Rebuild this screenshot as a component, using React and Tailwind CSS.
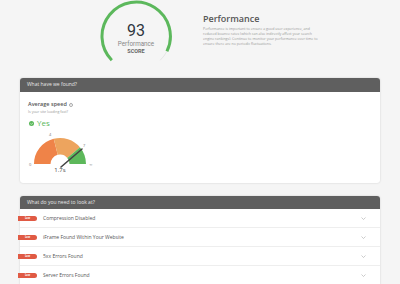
import React from "react";

function pt(cx, cy, r, deg) {
  const a = (deg * Math.PI) / 180;
  return [cx + r * Math.cos(a), cy - r * Math.sin(a)];
}
function sector(cx, cy, ro, ri, a0, a1) {
  const [x0, y0] = pt(cx, cy, ro, a0);
  const [x1, y1] = pt(cx, cy, ro, a1);
  const [x2, y2] = pt(cx, cy, ri, a1);
  const [x3, y3] = pt(cx, cy, ri, a0);
  return `M${x0} ${y0} A${ro} ${ro} 0 0 1 ${x1} ${y1} L${x2} ${y2} A${ri} ${ri} 0 0 0 ${x3} ${y3} Z`;
}

function ScoreRing() {
  return (
    <svg width="72" height="72" viewBox="0 0 72 72" className="block">
      <path d="M11.8 60.2 A34.2 34.2 0 1 1 66.9 51.3" fill="none" stroke="#5cb85c" strokeWidth="3" />
      <path d="M66.9 51.3 A34.2 34.2 0 0 1 60.2 60.2" fill="none" stroke="#e6e6e6" strokeWidth="1" />
    </svg>
  );
}

function Gauge() {
  const cx = 35, cy = 33;
  return (
    <svg width="72" height="44" viewBox="0 0 72 44" className="block">
      <path d={sector(cx, cy, 26, 9.5, 180, 104)} fill="#ef8348" />
      <path d={sector(cx, cy, 26, 9.5, 104, 40)} fill="#eda45e" />
      <path d={sector(cx, cy, 26, 9.5, 40, 0)} fill="#5db85b" />
      <text x="4" y="35" fontSize="4" fill="#777" fontFamily="Open Sans">0</text>
      <text x="24" y="5" fontSize="4" fill="#777" fontFamily="Open Sans">4</text>
      <text x="58" y="16" fontSize="4" fill="#777" fontFamily="Open Sans">7</text>
      <text x="64.5" y="35" fontSize="4" fill="#777" fontFamily="Open Sans">∞</text>
      <line x1="36" y1="36" x2="57" y2="18" stroke="#444" strokeWidth="1.6" strokeLinecap="round" />
      <text x="35" y="40.5" fontSize="6" fill="#444" textAnchor="middle" fontFamily="Open Sans">1.7s</text>
    </svg>
  );
}

function Row({ label, last }) {
  return (
    <div className={`relative flex h-[19px] items-center ${last ? "" : "border-b border-[#eeeeee]"}`}>
      <div className="absolute left-[-2px] top-[6.5px] flex h-[5.5px] w-[19px] items-center justify-center rounded-r-[3px] bg-[#e05a44] text-[2.5px] font-bold leading-[3px] text-white">
        Low
      </div>
      <span className="ml-[23px] text-[5px] leading-[7px] text-[#555]">{label}</span>
      <svg className="ml-auto mr-[14px]" width="5" height="3" viewBox="0 0 5 3">
        <path d="M0.5 0.5 L2.5 2.5 L4.5 0.5" fill="none" stroke="#aaa" strokeWidth="0.6" />
      </svg>
    </div>
  );
}

export default function App() {
  return (
    <div className="h-[284px] w-[400px] overflow-hidden bg-[#f5f5f5]" style={{ fontFamily: '"Open Sans", sans-serif' }}>
      <div className="flex h-[78px]">
        <div className="relative ml-[100px] h-[72px] w-[72px]">
          <ScoreRing />
          <div
            className="absolute inset-0 flex flex-col items-center pt-[21px]"
            style={{ fontFamily: 'Roboto, "Open Sans", sans-serif' }}
          >
            <span className="text-[16px] leading-[19px] text-[#2f3640]">93</span>
            <span className="mt-[0.5px] text-[6.3px] leading-[7.5px] text-[#888]">Performance</span>
            <span className="text-[5.5px] font-bold leading-[6.5px] text-[#666]">SCORE</span>
          </div>
        </div>
        <div className="ml-[31px] mt-[13px] w-[118px]">
          <div className="text-[9px] font-semibold leading-[11px] text-[#555]">Performance</div>
          <p className="mt-[2px] text-[3.55px] leading-[5px] text-[#999]">
            Performance is important to ensure a good user experience, and reduced bounce rates (which can also indirectly affect your search engine rankings). Continue to monitor your performance over time to ensure there are no periodic fluctuations.
          </p>
        </div>
      </div>

      <div className="mx-[20px] h-[105px] overflow-hidden rounded-[3px] bg-white shadow-[0_0_2px_rgba(0,0,0,0.18)]">
        <div className="flex h-[14px] items-center bg-[#5f5f5f] px-[7px] text-[5px] text-[#e8e8e8]">What have we found?</div>
        <div className="pl-[8px] pt-[9px]">
          <div className="flex items-center text-[5.5px] font-semibold leading-[7px] text-[#555]">
            Average speed
            <span className="ml-[2px] flex h-[4px] w-[4px] items-center justify-center rounded-full border-[0.5px] border-[#aaa] text-[3px] font-normal leading-[3px] text-[#aaa]">i</span>
          </div>
          <div className="mt-[1px] text-[3.6px] leading-[5px] text-[#999]">Is your site loading fast?</div>
          <div className="mt-[4px] flex items-center">
            <span className="ml-[1px] flex h-[5px] w-[5px] items-center justify-center rounded-full bg-[#5cb85c]">
              <svg width="3.5" height="3" viewBox="0 0 4 3">
                <path d="M0.5 1.5 L1.6 2.5 L3.5 0.5" fill="none" stroke="#fff" strokeWidth="0.7" />
              </svg>
            </span>
            <span className="ml-[3px] text-[8px] leading-[10px] text-[#5cb85c]">Yes</span>
          </div>
          <div className="ml-[-3px] mt-[3px]">
            <Gauge />
          </div>
        </div>
      </div>

      <div className="mx-[20px] mt-[13px] rounded-t-[3px] bg-white shadow-[0_0_2px_rgba(0,0,0,0.18)]">
        <div className="flex h-[13px] items-center rounded-t-[3px] bg-[#5f5f5f] px-[7px] text-[5px] text-[#e8e8e8]">What do you need to look at?</div>
        <Row label="Compression Disabled" />
        <Row label="iFrame Found Within Your Website" />
        <Row label="5xx Errors Found" />
        <Row label="Server Errors Found" last />
      </div>
    </div>
  );
}
